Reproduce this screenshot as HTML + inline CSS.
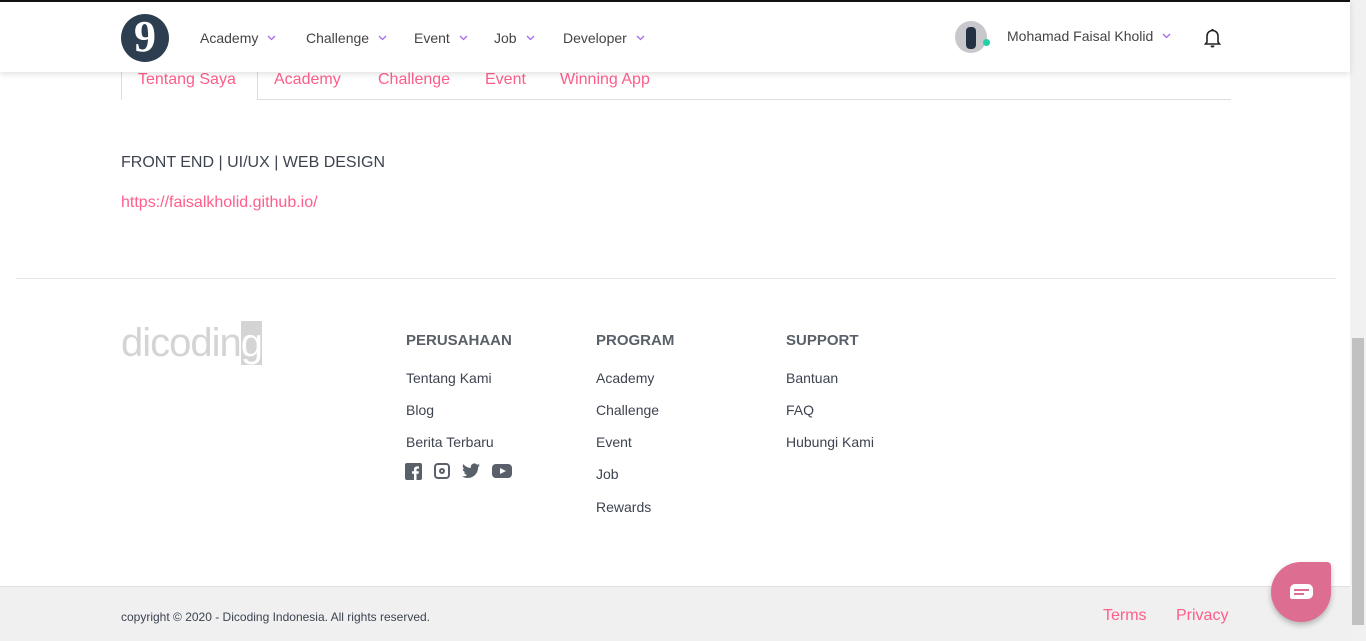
<!DOCTYPE html>
<html><head><style>
*{box-sizing:border-box;margin:0;padding:0}
body{width:1366px;height:641px;overflow:hidden;background:#fff;font-family:"Liberation Sans",sans-serif;position:relative;color:#3d4450}
.abs{position:absolute}
.nav{left:0;top:0;width:1350px;height:72px;background:#fff;border-top:2px solid #111;box-shadow:0 2px 6px rgba(0,0,0,.12);z-index:2}
.nv{position:absolute;top:28px;font-size:14px;color:#444}
.nv svg{margin-left:9px;vertical-align:2px}
.tab{top:71px;font-size:16px;color:#ff5d8a}
.fh{font-size:15px;font-weight:bold;color:#5a6069;top:332px}
.fl{font-size:14px;color:#3d4450}
</style></head><body>
<div class="abs nav">
 <div class="abs" style="left:121px;top:12px;width:48px;height:48px;border-radius:50%;background:#2d3e50;color:#fff;font:bold 44px/46px 'Liberation Serif',serif;text-align:center">9</div>
 <span class="nv" style="left:200px">Academy<svg width="9" height="6"><path d="M1 1l3.5 3.5L8 1" fill="none" stroke="#a56bef" stroke-width="1.3"/></svg></span>
 <span class="nv" style="left:306px">Challenge<svg width="9" height="6"><path d="M1 1l3.5 3.5L8 1" fill="none" stroke="#a56bef" stroke-width="1.3"/></svg></span>
 <span class="nv" style="left:414px">Event<svg width="9" height="6"><path d="M1 1l3.5 3.5L8 1" fill="none" stroke="#a56bef" stroke-width="1.3"/></svg></span>
 <span class="nv" style="left:494px">Job<svg width="9" height="6"><path d="M1 1l3.5 3.5L8 1" fill="none" stroke="#a56bef" stroke-width="1.3"/></svg></span>
 <span class="nv" style="left:563px">Developer<svg width="9" height="6"><path d="M1 1l3.5 3.5L8 1" fill="none" stroke="#a56bef" stroke-width="1.3"/></svg></span>
 <div class="abs" style="left:955px;top:19px;width:32px;height:32px;border-radius:50%;background:#c8c8cc"><div class="abs" style="left:11px;top:6px;width:10px;height:22px;background:#243044;border-radius:4px"></div><div class="abs" style="left:28px;top:18px;width:7px;height:7px;border-radius:50%;background:#1fd1a5"></div></div>
 <span class="nv" style="left:1007px;top:26px">Mohamad Faisal Kholid<svg width="9" height="6"><path d="M1 1l3.5 3.5L8 1" fill="none" stroke="#a56bef" stroke-width="1.3"/></svg></span>
 <svg class="abs" style="left:1204px;top:26px" width="17" height="20" viewBox="0 0 17 20"><path d="M3 14V8a5.5 5.5 0 0 1 11 0v6l1.5 2H1.5z" fill="none" stroke="#222" stroke-width="1.6"/><path d="M6.5 17.5a2 2 0 0 0 4 0" fill="#222"/><rect x="7.5" y="1" width="2" height="2" fill="#222"/></svg>
</div>
<div class="abs" style="left:121px;top:72px;width:137px;height:28px;border:1px solid #ddd;border-top:none;border-bottom:none;background:#fff"></div>
<div class="abs" style="left:257px;top:99px;width:974px;height:1px;background:#ddd"></div>
<span class="abs tab" style="left:138px">Tentang Saya</span>
<span class="abs tab" style="left:274px">Academy</span>
<span class="abs tab" style="left:378px">Challenge</span>
<span class="abs tab" style="left:485px">Event</span>
<span class="abs tab" style="left:560px">Winning App</span>
<div class="abs" style="left:121px;top:154px;font-size:16px;color:#3d4450">FRONT END | UI/UX | WEB DESIGN</div>
<div class="abs" style="left:121px;top:194px;font-size:16px;color:#ff5d8a">https://faisalkholid.github.io/</div>
<div class="abs" style="left:16px;top:278px;width:1320px;height:1px;background:#e3e3e3"></div>
<div class="abs" style="left:121px;top:321px;font-size:40px;color:#d4d4d4;letter-spacing:-1px">dicodin<span style="background:#d4d4d4;color:#fff">g</span></div>
<span class="abs fh" style="left:406px">PERUSAHAAN</span>
<span class="abs fh" style="left:596px">PROGRAM</span>
<span class="abs fh" style="left:786px">SUPPORT</span>
<span class="abs fl" style="left:406px;top:370px">Tentang Kami</span>
<span class="abs fl" style="left:406px;top:402px">Blog</span>
<span class="abs fl" style="left:406px;top:434px">Berita Terbaru</span>
<svg class="abs" style="left:405px;top:463px" width="17" height="17" viewBox="0 0 17 17"><rect width="17" height="17" rx="2" fill="#5a6069"/><path d="M11.5 17v-6.3h2.1l.3-2.4h-2.4V6.8c0-.7.2-1.2 1.2-1.2H14V3.5a17 17 0 0 0-1.9-.1c-1.9 0-3.1 1.1-3.1 3.2v1.7H7v2.4h2V17z" fill="#fff"/></svg>
<div class="abs" style="left:434px;top:463px;width:16px;height:16px;border:2px solid #5a6069;border-radius:4px"><div class="abs" style="left:3px;top:3px;width:6px;height:6px;border:2px solid #5a6069;border-radius:50%"></div></div>
<svg class="abs" style="left:462px;top:463px" width="18" height="16" viewBox="0 0 24 20"><path d="M24 2.4a9.8 9.8 0 0 1-2.8.8A5 5 0 0 0 23.3.4a9.9 9.9 0 0 1-3.1 1.2A4.9 4.9 0 0 0 11.8 6 14 14 0 0 1 1.7.9a4.9 4.9 0 0 0 1.5 6.6 4.9 4.9 0 0 1-2.2-.6 4.9 4.9 0 0 0 3.9 4.8 4.9 4.9 0 0 1-2.2.1 4.9 4.9 0 0 0 4.6 3.4A9.9 9.9 0 0 1 0 17.2 14 14 0 0 0 7.5 19.4c9.1 0 14-7.5 14-14v-.6A10 10 0 0 0 24 2.4z" fill="#5a6069"/></svg>
<div class="abs" style="left:492px;top:464px;width:20px;height:14px;background:#5a6069;border-radius:4px"><div class="abs" style="left:8px;top:4px;border-left:6px solid #fff;border-top:3px solid transparent;border-bottom:3px solid transparent"></div></div>
<span class="abs fl" style="left:596px;top:370px">Academy</span>
<span class="abs fl" style="left:596px;top:402px">Challenge</span>
<span class="abs fl" style="left:596px;top:434px">Event</span>
<span class="abs fl" style="left:596px;top:466px">Job</span>
<span class="abs fl" style="left:596px;top:499px">Rewards</span>
<span class="abs fl" style="left:786px;top:370px">Bantuan</span>
<span class="abs fl" style="left:786px;top:402px">FAQ</span>
<span class="abs fl" style="left:786px;top:434px">Hubungi Kami</span>
<div class="abs" style="left:0;top:586px;width:1350px;height:55px;background:#f0f0f0;border-top:1px solid #e0e0e0"></div>
<span class="abs" style="left:121px;top:610px;font-size:12px;color:#3d4450">copyright © 2020 - Dicoding Indonesia. All rights reserved.</span>
<span class="abs" style="left:1103px;top:607px;font-size:16px;color:#ff5d8a">Terms</span>
<span class="abs" style="left:1176px;top:607px;font-size:16px;color:#ff5d8a">Privacy</span>
<div class="abs" style="left:1271px;top:562px;width:60px;height:60px;background:#de6d92;border-radius:30px 4px 30px 30px;box-shadow:0 3px 6px rgba(0,0,0,.25)"><div class="abs" style="left:19px;top:22px;width:23px;height:15px;background:#fff;border-radius:5px 5px 5px 2px"><div class="abs" style="left:4px;top:5px;width:15px;height:2px;background:#de6d92"></div><div class="abs" style="left:4px;top:9px;width:10px;height:2px;background:#de6d92"></div></div></div>
<div class="abs" style="left:1350px;top:0;width:16px;height:641px;background:#f1f1f1"><div class="abs" style="left:2px;top:338px;width:12px;height:287px;background:#c1c1c1"></div></div>
</body></html>
